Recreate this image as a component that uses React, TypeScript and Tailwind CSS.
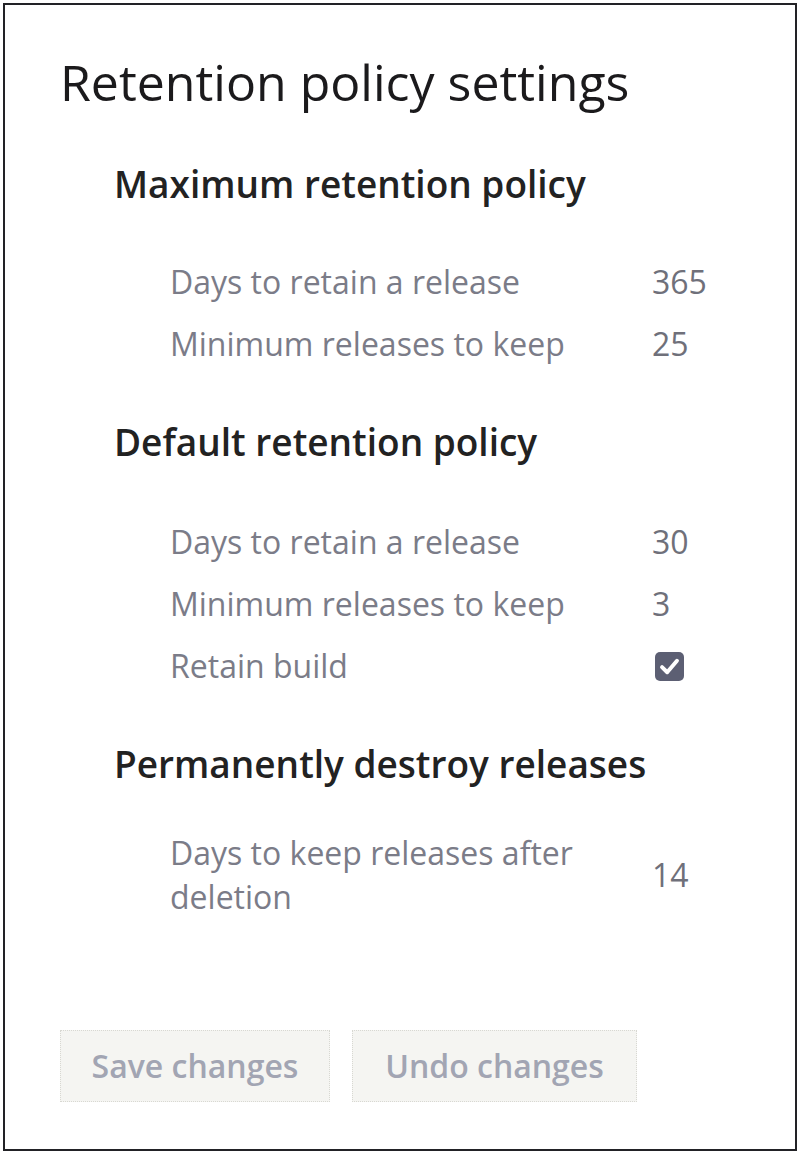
const font = { fontFamily: '"Open Sans", "Noto Sans", sans-serif' };

function Row({ label, value }: { label: string; value: React.ReactNode }) {
    return (
        <div className="flex items-center h-[62px]">
            <div className="w-[647px] shrink-0 pl-[165px] text-[32px] leading-[44px] text-[#7b7c88]">{label}</div>
            <div className="text-[32px] leading-[44px] text-[#6f707a]">{value}</div>
        </div>
    );
}

function Check() {
    return (
        <div className="w-[29px] h-[29px] ml-[3px] rounded-[5px] bg-[#5c5f73] flex items-center justify-center">
            <svg width="23" height="23" viewBox="0 0 20 20" fill="none">
                <path d="M3.5 10.5 L8 15 L16.5 5" stroke="white" strokeWidth="3.4" strokeLinecap="round" strokeLinejoin="round" />
            </svg>
        </div>
    );
}

export default function App() {
    return (
        <div className="w-[800px] h-[1154px] bg-white p-[3px]" style={font}>
            <div className="h-full border-2 border-[#222226] flex flex-col">
                {/* Title */}
                <h1 className="mt-[47px] pl-[55px] text-[50px] leading-[60px] font-medium text-[#1b1a1c]">
                    Retention policy settings
                </h1>

                {/* Maximum */}
                <h2 className="mt-[48px] pl-[109px] text-[37px] leading-[48px] font-semibold text-[#222]">
                    Maximum retention policy
                </h2>
                <div className="mt-[43px]">
                    <Row label="Days to retain a release" value="365" />
                    <Row label="Minimum releases to keep" value="25" />
                </div>

                {/* Default */}
                <h2 className="mt-[43px] pl-[109px] text-[37px] leading-[48px] font-semibold text-[#222]">
                    Default retention policy
                </h2>
                <div className="mt-[45px]">
                    <Row label="Days to retain a release" value="30" />
                    <Row label="Minimum releases to keep" value="3" />
                    <Row label="Retain build" value={<Check />} />
                </div>

                {/* Destroy */}
                <h2 className="mt-[43px] pl-[109px] text-[37px] leading-[48px] font-semibold text-[#222]">
                    Permanently destroy releases
                </h2>
                <div className="mt-[43px] flex items-center">
                    <div className="w-[647px] shrink-0 pl-[165px] text-[32px] leading-[44px] text-[#7b7c88]">
                        Days to keep releases after deletion
                    </div>
                    <div className="text-[32px] leading-[44px] text-[#6f707a]">14</div>
                </div>

                {/* Buttons */}
                <div className="mt-[111px] pl-[55px] flex gap-[22px]">
                    <button className="w-[270px] h-[72px] bg-[#f5f5f2] border border-dotted border-[#d8d8d2] text-[32px] font-semibold text-[#a2a5b3]">
                        Save changes
                    </button>
                    <button className="w-[285px] h-[72px] bg-[#f5f5f2] border border-dotted border-[#d8d8d2] text-[32px] font-semibold text-[#a2a5b3]">
                        Undo changes
                    </button>
                </div>
            </div>
        </div>
    );
}
